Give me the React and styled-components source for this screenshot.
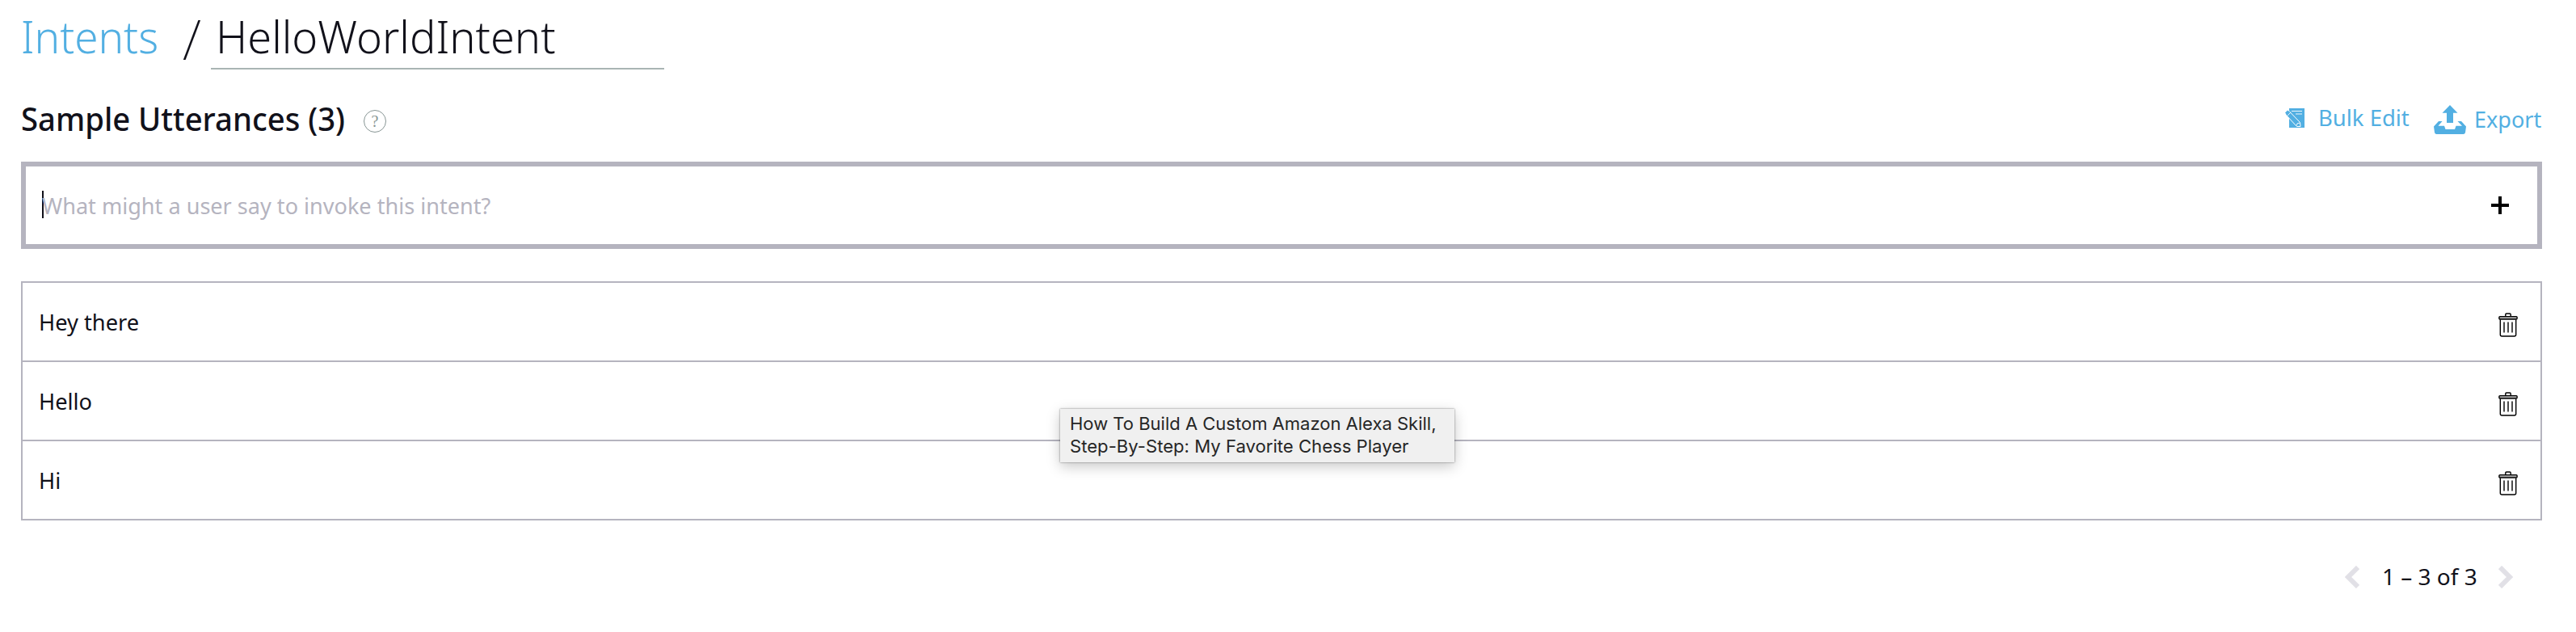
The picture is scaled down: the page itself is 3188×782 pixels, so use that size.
import React from "react";
import styled, { createGlobalStyle } from "styled-components";

const Global = createGlobalStyle`
  * { box-sizing: border-box; }
  body { margin: 0; background: #fff; color: #11111a; font-family: "Noto Sans", "Open Sans", sans-serif; }
  button { font: inherit; color: inherit; background: none; border: 0; padding: 0; margin: 0; outline: none; }
  svg { display: block; flex: none; }
`;

const Page = styled.main`
  width: 3188px;
  height: 782px;
  padding: 0 42px 0 26px;
  overflow: hidden;
`;

const Breadcrumb = styled.header`
  display: flex;
  height: 86px;
  font-size: 55px;
  font-weight: 300;
  line-height: 90px;
  white-space: pre;
`;

const Fit = styled.span`
  display: inline-block;
  transform-origin: 0 50%;
  transform: scaleX(${(p) => p.$x || 1});
  white-space: nowrap;
`;

const Crumb = styled.a`
  width: 200px;
  color: #52afe2;
`;

const Slash = styled.span`
  width: 35px;
  font-size: 69px;
  font-weight: 200;
  line-height: 94px;
`;

const IntentName = styled.div`
  width: 561px;
  padding-left: 6px;
  border-bottom: 2px solid #a9b5b4;
`;

const SectionBar = styled.div`
  display: flex;
  align-items: center;
  height: 114px;
  padding-top: 8px;
`;

const SectionTitle = styled.h2`
  margin: 0;
  width: 424px;
  font-size: 39px;
  font-weight: 500;
  line-height: 54px;
`;

const Help = styled.span`
  display: flex;
  align-items: center;
  justify-content: center;
  width: 28px;
  height: 28px;
  margin-top: 6px;
  border: 1px solid #879594;
  border-radius: 50%;
  color: #879594;
  font-family: "Liberation Serif", serif;
  font-size: 20px;
  line-height: 24px;
`;

const Actions = styled.div`
  display: flex;
  align-items: center;
  margin-left: auto;
`;

const Action = styled.button`
  display: flex;
  align-items: center;
  height: 40px;
  color: #52afe2;
  font-size: 28px;
  line-height: 40px;
  margin: ${(p) => p.$margin};
  gap: ${(p) => p.$gap}px;
  svg { margin-top: 2px; }
`;

const ActionLabel = styled.span`
  width: ${(p) => p.$w}px;
  text-align: left;
`;

const Field = styled.div`
  display: flex;
  align-items: center;
  height: 108px;
  padding: 0 35px 0 20px;
  border: 6px solid #b5b4bf;
  font-size: 28px;
  color: #b5b4bf;
`;

const Caret = styled.span`
  width: 2px;
  height: 34px;
  margin: -2px -2px 0 0;
  background: #11111a;
`;

const Placeholder = styled.span`
  flex: 1;
  line-height: 40px;
`;

const List = styled.ul`
  list-style: none;
  margin: 40px 0 0;
  padding: 0;
  border: 2px solid #b5b4bf;
`;

const Row = styled.li`
  display: flex;
  align-items: center;
  justify-content: space-between;
  height: 98px;
  padding: 0 28px 0 20px;
  font-size: 28px;
  line-height: 40px;
  & + & { border-top: 2px solid #b5b4bf; }
  &:first-child { height: 96px; }
  svg { margin-top: 8px; }
`;

const Pager = styled.nav`
  display: flex;
  align-items: center;
  justify-content: flex-end;
  height: 40px;
  margin-top: 50px;
  padding-right: 36px;
  font-size: 28px;
  line-height: 40px;
`;

const Range = styled.span`
  width: 117px;
  margin: -2px 27px 0 28px;
`;

const Tooltip = styled.div`
  position: absolute;
  left: 1312px;
  top: 506px;
  width: 488px;
  height: 66px;
  padding: 4px 12px;
  background: #f0f0f0;
  box-shadow: 0 0 2px rgba(0, 0, 0, 0.5), 0 5px 16px rgba(0, 0, 0, 0.22);
  color: #262626;
  font-family: Inter, sans-serif;
  font-size: 22px;
  line-height: 28px;
  white-space: nowrap;
`;

const Line = styled.div`
  height: 28px;
`;

const BulkIcon = () => (
  <svg width="24" height="24" viewBox="0 0 24 24">
    <path d="M5 0h19v24H5z" fill="#52afe2" />
    <path d="M8 3.500h13M13 7h8" stroke="#fff" strokeWidth="0.900" />
    <path d="M4.500 3 18.500 17.500 19 22.500H14.500L1 8" fill="#52afe2" stroke="#fff" strokeWidth="1" />
    <path d="M0 5.500 3 2.500 6 5 2.500 8.500z" fill="#52afe2" />
    <path d="M3 9 7 5M14 21.500Q14 18 18 18" fill="none" stroke="#fff" strokeWidth="0.900" />
  </svg>
);

const ExportIcon = () => (
  <svg width="40" height="36" viewBox="0 0 40 36" fill="#52afe2">
    <path d="M20 0 29.500 9.700H24V22h-8V9.700h-5.500z" />
    <path d="M6 20h4.500L5.500 25.700H13L14.500 30H26l1.500-4.300H35L29.500 20H34l6 6.500L39 34q-.4 2-2.500 2h-33Q1.400 36 1 34L0 26.500z" />
  </svg>
);

const PlusIcon = () => (
  <svg width="22" height="22" viewBox="0 0 22 22">
    <path d="M11 0v22M0 11h22" stroke="#000" strokeWidth="4" />
  </svg>
);

const TrashIcon = () => (
  <svg width="24" height="30" viewBox="0 0 24 30" fill="none" stroke="#000" strokeWidth="1.400">
    <path d="M8.800 4V2.300Q8.800 1 10 1h4q1.200 0 1.200 1.300V4" />
    <rect x="0.900" y="4.600" width="22.200" height="3.400" rx="1" fill="#aaa" />
    <path d="M2.300 8.500v18.500q0 2 2 2h15.400q2 0 2-2V8.500" />
    <path d="M7 11.500v13M12 11.500v13M17 11.500v13" />
  </svg>
);

const Chevron = ({ right }) => (
  <svg width="18" height="28" viewBox="0 0 18 28" fill="none" stroke="#e1e0e6" strokeWidth="6">
    <path d={right ? "M2 2 14 14 2 26" : "M16 2 4 14 16 26"} />
  </svg>
);

const utterances = ["Hey there", "Hello", "Hi"];

export default function App() {
  return (
    <Page>
      <Global />
      <Breadcrumb>
        <Crumb><Fit $x={0.965}>Intents</Fit></Crumb>
        <Slash>/</Slash>
        <IntentName><Fit $x={0.985}>HelloWorldIntent</Fit></IntentName>
      </Breadcrumb>
      <SectionBar>
        <SectionTitle><Fit $x={0.981}>Sample Utterances (3)</Fit></SectionTitle>
        <Help>?</Help>
        <Actions>
          <Action $gap={17} $margin="-4px 32px 0 0">
            <BulkIcon />
            <ActionLabel $w={111}><Fit $x={0.98}>Bulk Edit</Fit></ActionLabel>
          </Action>
          <Action $gap={10} $margin="0">
            <ExportIcon />
            <ActionLabel $w={84}><Fit $x={0.965}>Export</Fit></ActionLabel>
          </Action>
        </Actions>
      </SectionBar>
      <Field>
        <Caret />
        <Placeholder><Fit $x={0.967}>What might a user say to invoke this intent?</Fit></Placeholder>
        <PlusIcon />
      </Field>
      <List>
        {utterances.map((text) => (
          <Row key={text}>
            <Fit $x={0.973}>{text}</Fit>
            <TrashIcon />
          </Row>
        ))}
      </List>
      <Pager>
        <Chevron />
        <Range><Fit>1 – 3 of 3</Fit></Range>
        <Chevron right />
      </Pager>
      <Tooltip>
        <Line><Fit>How To Build A Custom Amazon Alexa Skill,</Fit></Line>
        <Line><Fit $x={1.005}>Step-By-Step: My Favorite Chess Player</Fit></Line>
      </Tooltip>
    </Page>
  );
}
